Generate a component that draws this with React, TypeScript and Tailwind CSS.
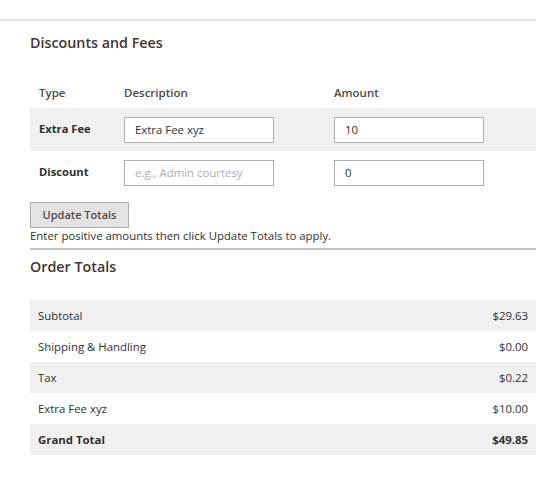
const totals = [
  { label: "Subtotal", value: "$29.63" },
  { label: "Shipping & Handling", value: "$0.00" },
  { label: "Tax", value: "$0.22" },
  { label: "Extra Fee xyz", value: "$10.00" },
];

const inputClass =
  "h-[26px] w-[150px] border border-[#adadad] bg-white px-[10px] text-[11.4px] text-[#303030] outline-none placeholder:text-[#adadad]";

export default function App() {
  return (
    <div className="min-h-[495px] bg-white font-['Open_Sans',sans-serif] text-[11.4px] text-[#303030]">
      <div className="h-[19px]" />
      <div className="w-[536px] border-t-2 border-[#e3e3e3]" />

      <section className="w-[536px] pl-[30px]">
        <h2 className="mt-[12px] text-[14.3px] leading-[20px] font-semibold text-[#41362f]">
          Discounts and Fees
        </h2>

        <div className="mt-[25px]">
          <div className="flex h-[30px] items-center text-[11.5px] font-semibold text-[#514943]">
            <div className="w-[94px] pl-[9px]">Type</div>
            <div className="w-[210px]">Description</div>
            <div>Amount</div>
          </div>

          <div className="flex h-[43px] items-center bg-[#f0f0f0]">
            <div className="w-[94px] pl-[9px] text-[11.2px] font-bold">Extra Fee</div>
            <div className="w-[210px]">
              <input className={inputClass} defaultValue="Extra Fee xyz" />
            </div>
            <input className={inputClass} defaultValue="10" />
          </div>

          <div className="flex h-[43px] items-center">
            <div className="w-[94px] pl-[9px] text-[11.2px] font-bold">Discount</div>
            <div className="w-[210px]">
              <input className={inputClass} placeholder="e.g., Admin courtesy" />
            </div>
            <input className={inputClass} defaultValue="0" />
          </div>
        </div>

        <button className="mt-[8px] h-[26px] w-[99px] border border-[#adadad] bg-[#e3e3e3] text-[11px] font-semibold text-[#514943]">
          Update Totals
        </button>
        <p className="leading-[16px]">
          Enter positive amounts then click Update Totals to apply.
        </p>

        <div className="mt-[4px] border-t-2 border-[#c4c4c4]" />

        <h2 className="mt-[7px] text-[14.3px] leading-[20px] font-semibold text-[#41362f]">
          Order Totals
        </h2>

        <div className="mt-[23px]">
          {totals.map((row, i) => (
            <div
              key={row.label}
              className={`flex h-[31px] items-center justify-between px-[8px] ${
                i % 2 === 0 ? "bg-[#f0f0f0]" : "bg-white"
              }`}
            >
              <span>{row.label}</span>
              <span>{row.value}</span>
            </div>
          ))}
          <div className="flex h-[31px] items-center justify-between bg-[#f0f0f0] px-[8px] font-bold text-[#303030]">
            <span>Grand Total</span>
            <span>$49.85</span>
          </div>
        </div>
      </section>
    </div>
  );
}
